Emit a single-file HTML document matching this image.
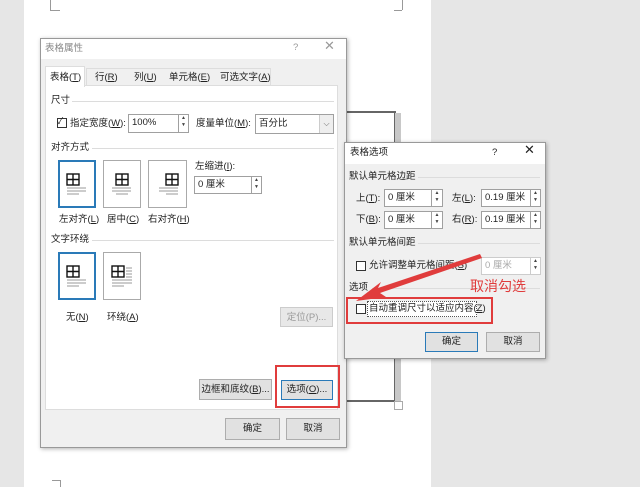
<!DOCTYPE html>
<html><head><meta charset="utf-8">
<style>
*{margin:0;padding:0;box-sizing:border-box}
body{width:640px;height:487px;overflow:hidden;background:#e6e6e6;position:relative;font-family:"Liberation Sans","Noto Sans CJK SC",sans-serif;font-size:9.5px;color:#222}
.a{position:absolute}
.t{position:absolute;white-space:nowrap;line-height:12px}
.btn{position:absolute;background:#e1e1e1;border:1px solid #adadad;text-align:center;line-height:19px;font-size:9.5px;white-space:nowrap;overflow:hidden}
.inp{position:absolute;background:#fff;border:1px solid #a0a0a0;line-height:15px;padding-left:3px;white-space:nowrap}
.spin{position:absolute;background:#fff;border:1px solid #a0a0a0;font-size:5px;line-height:7px;text-align:center;color:#444}
.cb{position:absolute;width:10px;height:10px;border:1px solid #333;background:#fff}
.hl{position:absolute;height:1px;background:#dcdcdc}
.ib{position:absolute;background:#fff;border:1px solid #aaa}
</style></head><body>
<div class="a" style="left:24px;top:0;width:407px;height:487px;background:#fff"></div>
<div class="a" style="left:50px;top:0;width:1px;height:10px;background:#999"></div>
<div class="a" style="left:50px;top:10px;width:10px;height:1px;background:#999"></div>
<div class="a" style="left:402px;top:0;width:1px;height:10px;background:#999"></div>
<div class="a" style="left:394px;top:10px;width:8px;height:1px;background:#999"></div>
<div class="a" style="left:60px;top:480px;width:1px;height:7px;background:#999"></div>
<div class="a" style="left:52px;top:480px;width:8px;height:1px;background:#999"></div>
<div class="a" style="left:340px;top:111px;width:56px;height:291px;border:2px solid #666;border-left:none"></div>
<div class="a" style="left:395px;top:113px;width:6px;height:288px;background:#c8c8c8"></div>
<div class="a" style="left:394px;top:401px;width:9px;height:9px;border:1px solid #aaa;background:#fff"></div>

<div class="a" style="left:40px;top:38px;width:307px;height:410px;background:#f0f0f0;border:1px solid #999;box-shadow:1px 1px 4px rgba(0,0,0,.3)"></div>
<div class="a" style="left:41px;top:39px;width:305px;height:20px;background:#fff"></div>
<div class="t" style="left:45px;top:43px;color:#888">表格属性</div>
<div class="t" style="left:293px;top:42px;color:#999">?</div>
<div class="t" style="left:324px;top:40px;color:#999;font-size:13px">✕</div>
<div class="a" style="left:45px;top:85px;width:293px;height:325px;background:#fff;border:1px solid #ddd"></div>
<div class="a" style="left:45px;top:66px;width:40px;height:21px;background:#fff;border:1px solid #ddd;border-bottom:none"></div>
<div class="t" style="left:50px;top:72px">表格(<u>T</u>)</div>
<div class="a" style="left:86px;top:68px;width:185px;height:17px;border:1px solid #ddd;border-bottom:none;background:#f0f0f0"></div>
<div class="t" style="left:95px;top:72px">行(<u>R</u>)</div>
<div class="t" style="left:134px;top:72px">列(<u>U</u>)</div>
<div class="t" style="left:169px;top:72px">单元格(<u>E</u>)</div>
<div class="t" style="left:220px;top:72px">可选文字(<u>A</u>)</div>
<div class="t" style="left:51px;top:95px">尺寸</div><div class="hl" style="left:72px;top:101px;width:262px"></div>
<div class="cb" style="left:57px;top:118px"></div><div class="t" style="left:57px;top:115px;font-size:9px">✓</div>
<div class="t" style="left:70px;top:118px">指定宽度(<u>W</u>):</div>
<div class="inp" style="left:128px;top:114px;width:51px;height:19px">100%</div>
<div class="spin" style="left:178px;top:114px;width:11px;height:19px">▲<br>▼</div>
<div class="t" style="left:196px;top:118px">度量单位(<u>M</u>):</div>
<div class="inp" style="left:255px;top:114px;width:79px;height:20px;line-height:17px">百分比</div>
<div class="a" style="left:319px;top:115px;width:14px;height:18px;background:#eee;border-left:1px solid #ccc;font-size:8px;text-align:center;line-height:18px;color:#666">⌵</div>
<div class="t" style="left:51px;top:142px">对齐方式</div><div class="hl" style="left:92px;top:148px;width:242px"></div>
<div class="ib" style="left:58px;top:160px;width:38px;height:48px;border:2px solid #2a7ab8"></div>
<div class="ib" style="left:103px;top:160px;width:38px;height:48px"></div>
<div class="ib" style="left:148px;top:160px;width:39px;height:48px"></div>
<div class="t" style="left:59px;top:214px">左对齐(<u>L</u>)</div>
<div class="t" style="left:107px;top:214px">居中(<u>C</u>)</div>
<div class="t" style="left:148px;top:214px">右对齐(<u>H</u>)</div>
<div class="t" style="left:195px;top:161px">左缩进(<u>I</u>):</div>
<div class="inp" style="left:194px;top:176px;width:58px;height:18px">0 厘米</div>
<div class="spin" style="left:251px;top:176px;width:11px;height:18px">▲<br>▼</div>
<div class="t" style="left:51px;top:234px">文字环绕</div><div class="hl" style="left:92px;top:240px;width:242px"></div>
<div class="ib" style="left:58px;top:252px;width:38px;height:48px;border:2px solid #2a7ab8"></div>
<div class="ib" style="left:103px;top:252px;width:38px;height:48px"></div>
<div class="t" style="left:66px;top:312px">无(<u>N</u>)</div>
<div class="t" style="left:107px;top:312px">环绕(<u>A</u>)</div>
<svg class="a" style="left:0;top:0" width="640" height="487">
<g fill="none" stroke="#111" stroke-width="1.4">
<rect x="67" y="174" width="12" height="11"/><path d="M73 174v11M67 179.5h12"/>
<rect x="116" y="174" width="12" height="11"/><path d="M122 174v11M116 179.5h12"/>
<rect x="166" y="174" width="12" height="11"/><path d="M172 174v11M166 179.5h12"/>
<rect x="67" y="266" width="12" height="11"/><path d="M73 266v11M67 271.5h12"/>
<rect x="112" y="266" width="12" height="11"/><path d="M118 266v11M112 271.5h12"/>
</g>
<g stroke="#999" stroke-width="1">
<path d="M67 188h19M67 191h19M67 194h12"/>
<path d="M112 188h19M112 191h19M116 194h12"/>
<path d="M159 188h19M159 191h19M166 194h12"/>
<path d="M67 280h19M67 283h19M67 286h12"/>
<path d="M126 268h6M126 271h6M126 274h6M126 277h6M112 280h20M112 283h20M112 286h12"/>
</g>
</svg>
<div class="btn" style="left:280px;top:307px;width:53px;height:20px;color:#999;background:#e8e8e8;border-color:#ccc">定位(P)...</div>
<div class="btn" style="left:199px;top:379px;width:73px;height:21px">边框和底纹(<u>B</u>)...</div>
<div class="btn" style="left:281px;top:380px;width:52px;height:20px;border:1px solid #2a7ab8;line-height:18px">选项(<u>O</u>)...</div>
<div class="a" style="left:275px;top:365px;width:65px;height:43px;border:2px solid #e03c3c"></div>
<div class="btn" style="left:225px;top:418px;width:55px;height:22px">确定</div>
<div class="btn" style="left:286px;top:418px;width:54px;height:22px">取消</div>

<div class="a" style="left:344px;top:142px;width:202px;height:217px;background:#f0f0f0;border:1px solid #999;box-shadow:1px 1px 4px rgba(0,0,0,.3)"></div>
<div class="a" style="left:345px;top:143px;width:200px;height:21px;background:#fff"></div>
<div class="t" style="left:350px;top:147px">表格选项</div>
<div class="t" style="left:492px;top:147px">?</div>
<div class="t" style="left:524px;top:144px;font-size:13px">✕</div>
<div class="t" style="left:349px;top:171px">默认单元格边距</div><div class="hl" style="left:418px;top:177px;width:122px"></div>
<div class="t" style="left:356px;top:193px">上(<u>T</u>):</div>
<div class="inp" style="left:384px;top:189px;width:48px;height:18px">0 厘米</div>
<div class="spin" style="left:431px;top:189px;width:12px;height:18px">▲<br>▼</div>
<div class="t" style="left:452px;top:193px">左(<u>L</u>):</div>
<div class="inp" style="left:481px;top:189px;width:50px;height:18px">0.19 厘米</div>
<div class="spin" style="left:530px;top:189px;width:11px;height:18px">▲<br>▼</div>
<div class="t" style="left:356px;top:214px">下(<u>B</u>):</div>
<div class="inp" style="left:384px;top:211px;width:48px;height:18px">0 厘米</div>
<div class="spin" style="left:431px;top:211px;width:12px;height:18px">▲<br>▼</div>
<div class="t" style="left:452px;top:214px">右(<u>R</u>):</div>
<div class="inp" style="left:481px;top:211px;width:50px;height:18px">0.19 厘米</div>
<div class="spin" style="left:530px;top:211px;width:11px;height:18px">▲<br>▼</div>
<div class="t" style="left:349px;top:237px">默认单元格间距</div><div class="hl" style="left:418px;top:243px;width:122px"></div>
<div class="cb" style="left:356px;top:261px"></div>
<div class="t" style="left:369px;top:260px">允许调整单元格间距(<u>S</u>)</div>
<div class="inp" style="left:481px;top:257px;width:50px;height:18px;color:#aaa;border-color:#ccc">0 厘米</div>
<div class="spin" style="left:530px;top:257px;width:11px;height:18px;border-color:#ccc">▲<br>▼</div>
<div class="t" style="left:349px;top:282px">选项</div><div class="hl" style="left:372px;top:288px;width:168px"></div>
<div class="t" style="left:470px;top:278px;color:#e03c3c;font-size:14px;line-height:16px">取消勾选</div>
<div class="a" style="left:346px;top:297px;width:147px;height:27px;border:2px solid #e03c3c"></div>
<div class="cb" style="left:356px;top:304px"></div>
<div class="a" style="left:367px;top:301px;width:110px;height:16px;border:1px dotted #555;background:#fff"></div>
<div class="t" style="left:369px;top:303px">自动重调尺寸以适应内容(<u>Z</u>)</div>
<div class="btn" style="left:425px;top:332px;width:53px;height:20px;border:1px solid #2a7ab8;line-height:18px">确定</div>
<div class="btn" style="left:486px;top:332px;width:54px;height:20px;line-height:18px">取消</div>
<svg class="a" style="left:0;top:0" width="640" height="487">
<path d="M480 254 L378 288 L381 282 L356 301 L386 297 L380 293 L482 258 Z" fill="#e03c3c"/>
</svg>
</body></html>
